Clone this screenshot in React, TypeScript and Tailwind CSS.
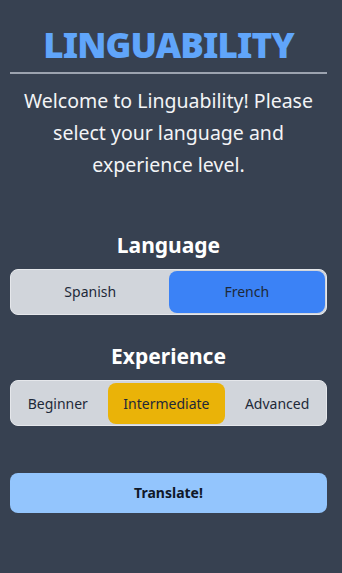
import { useState } from "react";

const languages = ["Spanish", "French"];
const levels = ["Beginner", "Intermediate", "Advanced"];

export default function App() {
  const [language, setLanguage] = useState("French");
  const [level, setLevel] = useState("Intermediate");

  return (
    <div
      className="min-h-screen w-full bg-[#374151] pl-[10px] pr-[15px] pt-[24px] pb-10"
      style={{ fontFamily: '"Noto Sans", "Open Sans", sans-serif' }}
    >
      <h1 className="text-center text-[35px] leading-[42px] font-black tracking-tight text-[#60a5fa]">
        LINGUABILITY
      </h1>
      <hr className="mt-[6px] border-0 h-[2px] bg-[#9ca3af]" />
      <p className="mt-[11px] text-center text-[19.5px] leading-[32px] text-gray-100">
        Welcome to Linguability! Please select your language and experience level.
      </p>

      <h2 className="mt-[48px] text-center text-[21px] leading-[32px] font-bold text-white">
        Language
      </h2>
      <div className="mt-[8px] flex h-[46px] rounded-lg border border-gray-200 bg-[#d1d5db] p-[1px]">
        {languages.map((l) => (
          <button
            key={l}
            onClick={() => setLanguage(l)}
            className={
              l === language
                ? "flex-1 rounded-lg bg-[#3b82f6] text-sm text-gray-800"
                : "flex-1 rounded-lg text-sm text-gray-800"
            }
          >
            {l}
          </button>
        ))}
      </div>

      <h2 className="mt-[25px] text-center text-[21px] leading-[32px] font-bold text-white">
        Experience
      </h2>
      <div className="mt-[8px] flex h-[46px] gap-1 rounded-lg border border-gray-200 bg-[#d1d5db] px-[1px] pt-[2px] pb-[1px]">
        {levels.map((l) => (
          <button
            key={l}
            onClick={() => setLevel(l)}
            className={
              l === level
                ? "flex-auto rounded-lg bg-[#eab308] text-sm text-gray-800"
                : "flex-auto rounded-lg text-sm text-gray-800"
            }
          >
            {l}
          </button>
        ))}
      </div>

      <button className="mt-[47px] h-[40px] w-full rounded-lg bg-[#93c5fd] text-sm font-bold text-gray-900">
        Translate!
      </button>
    </div>
  );
}
